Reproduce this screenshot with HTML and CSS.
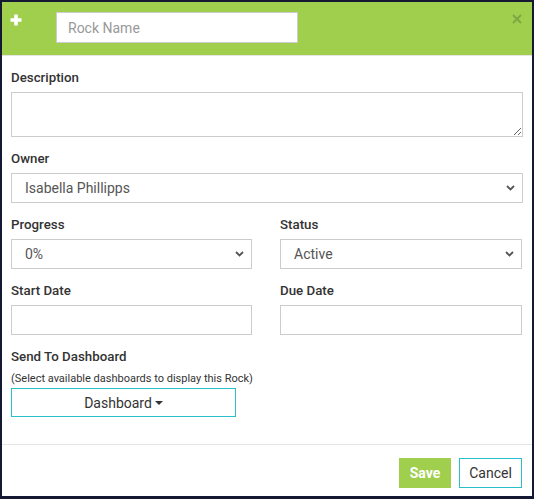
FILE: index.html
```html
<!DOCTYPE html>
<html>
<head>
<meta charset="utf-8">
<link rel="stylesheet" href="styles.css">
</head>
<body>
<div class="modal">
  <div class="modal-header">
    <svg class="plus" width="12" height="12" viewBox="0 0 12 12"><path d="M6 0.5V11.5M0.5 6H11.5" stroke="#fff" stroke-width="3.6"/></svg>
    <input class="name-input" type="text" placeholder="Rock Name">
    <svg class="close" width="10" height="10" viewBox="0 0 10 10"><path d="M1 1L9 9M9 1L1 9" stroke="#7ea743" stroke-width="1.8"/></svg>
  </div>
  <div class="modal-body">
    <div class="group">
      <label class="lbl">Description</label>
      <textarea class="ctrl area"></textarea>
    </div>
    <div class="group">
      <label class="lbl">Owner</label>
      <div class="selwrap">
        <select class="ctrl sel"><option>Isabella Phillipps</option></select>
        <svg class="chev" width="9" height="6" viewBox="0 0 9 6"><path d="M1 1L4.5 4.5L8 1" fill="none" stroke="#555" stroke-width="1.8"/></svg>
      </div>
    </div>
    <div class="row">
      <div class="group">
        <label class="lbl">Progress</label>
        <div class="selwrap">
          <select class="ctrl sel"><option>0%</option></select>
          <svg class="chev" width="9" height="6" viewBox="0 0 9 6"><path d="M1 1L4.5 4.5L8 1" fill="none" stroke="#555" stroke-width="1.8"/></svg>
        </div>
      </div>
      <div class="group">
        <label class="lbl">Status</label>
        <div class="selwrap">
          <select class="ctrl sel"><option>Active</option></select>
          <svg class="chev" width="9" height="6" viewBox="0 0 9 6"><path d="M1 1L4.5 4.5L8 1" fill="none" stroke="#555" stroke-width="1.8"/></svg>
        </div>
      </div>
    </div>
    <div class="row">
      <div class="group">
        <label class="lbl">Start Date</label>
        <input class="ctrl inp" type="text">
      </div>
      <div class="group">
        <label class="lbl">Due Date</label>
        <input class="ctrl inp" type="text">
      </div>
    </div>
    <div class="group dash">
      <label class="lbl">Send To Dashboard</label>
      <div class="hint">(Select available dashboards to display this Rock)</div>
      <button class="dash-btn">Dashboard<span class="caret"></span></button>
    </div>
  </div>
  <div class="modal-footer">
    <button class="btn save">Save</button>
    <button class="btn cancel">Cancel</button>
  </div>
</div>
</body>
</html>
```
FILE: styles.css
```css
* { box-sizing: border-box; }
html, body { margin: 0; padding: 0; }
body {
  background: #141833;
  font-family: Roboto, "Liberation Sans", Arial, sans-serif;
  color: #333;
  padding: 2px 2px 3px 2px;
}
.modal {
  width: 530px;
  height: 494px;
  background: #fff;
  display: flex;
  flex-direction: column;
}
.modal-header {
  height: 54px;
  background: #a0cf4e;
  border-bottom: 1px solid #e5e5e5;
  display: flex;
  align-items: flex-start;
  padding: 10px 10px 0 8px;
  flex: none;
}
.plus { margin-top: 2px; flex: none; }
.name-input {
  margin-left: 34px;
  width: 242px;
  height: 31px;
  border: 1px solid #ccc;
  background: #fff;
  padding: 0 11px;
  font-family: Roboto, "Liberation Sans", Arial, sans-serif;
  font-size: 14px;
  color: #555;
  outline: none;
}
.name-input::placeholder { color: #999; }
.close { margin-left: auto; margin-top: 2px; flex: none; }
.modal-body {
  flex: 1;
  padding: 12px 9px 0 9px;
  display: flex;
  flex-direction: column;
  gap: 12px;
}
.row {
  display: grid;
  grid-template-columns: 241px 242px;
  column-gap: 28px;
}
.group { display: flex; flex-direction: column; }
.lbl {
  font-size: 13.3px;
  font-weight: 500;
  line-height: 20px;
  margin-bottom: 4px;
  color: #333;
}
.ctrl {
  width: 100%;
  border: 1px solid #ccc;
  background: #fff;
  font-family: Roboto, "Liberation Sans", Arial, sans-serif;
  font-size: 14px;
  color: #555;
  border-radius: 0;
  outline: none;
  margin: 0;
}
.area { height: 45px; resize: vertical; display: block; }
.selwrap { position: relative; }
.sel {
  height: 30px;
  padding: 0 13px;
  appearance: none;
  -webkit-appearance: none;
  display: block;
}
.chev {
  position: absolute;
  right: 8px;
  top: 12px;
  pointer-events: none;
}
.inp { height: 30px; padding: 0 12px; display: block; }
.hint {
  font-size: 11px;
  line-height: 14px;
  color: #333;
  margin-top: 1px;
  margin-bottom: 2px;
}
.dash-btn {
  width: 225px;
  height: 29px;
  border: 1px solid #2bbfcb;
  background: #fff;
  font-family: Roboto, "Liberation Sans", Arial, sans-serif;
  font-size: 14px;
  color: #333;
  display: flex;
  align-items: center;
  justify-content: center;
  padding: 0;
}
.caret {
  display: inline-block;
  width: 0; height: 0;
  margin-left: 3px;
  border-left: 4px solid transparent;
  border-right: 4px solid transparent;
  border-top: 4px solid #333;
}
.modal-footer {
  border-top: 1px solid #e5e5e5;
  height: 52px;
  flex: none;
  display: flex;
  justify-content: flex-end;
  align-items: flex-start;
  gap: 8px;
  padding: 13px 10px 0 0;
}
.btn {
  height: 30px;
  font-family: Roboto, "Liberation Sans", Arial, sans-serif;
  font-size: 14px;
  padding: 0;
}
.save {
  width: 52px;
  background: #a0cf4e;
  border: 1px solid #a0cf4e;
  color: #fff;
  font-weight: 700;
}
.cancel {
  width: 63px;
  background: #fff;
  border: 1px solid #2bbfcb;
  color: #333;
}
```
